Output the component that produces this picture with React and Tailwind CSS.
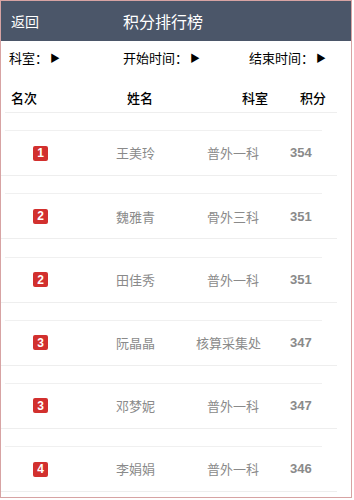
import React from 'react';

const rows = [
  { rank: 1, name: '王美玲', dept: '普外一科', score: 354 },
  { rank: 2, name: '魏雅青', dept: '骨外三科', score: 351 },
  { rank: 2, name: '田佳秀', dept: '普外一科', score: 351 },
  { rank: 3, name: '阮晶晶', dept: '核算采集处', score: 347 },
  { rank: 3, name: '邓梦妮', dept: '普外一科', score: 347 },
  { rank: 4, name: '李娟娟', dept: '普外一科', score: 346 },
];

function Filter({ label, className }) {
  return (
    <div className={`flex items-center ${className}`}>
      <span>{label}</span>
      <span className="ml-[2px] text-[10px]">▶</span>
    </div>
  );
}

export default function App() {
  return (
    <div
      className="w-[352px] h-[498px] border border-[#d7a3a3] bg-white overflow-hidden"
      style={{ fontFamily: '"Noto Sans CJK SC", "Liberation Sans", sans-serif' }}
    >
      {/* Header */}
      <div className="h-[40px] bg-[#4b5669] flex items-center text-white">
        <span className="ml-[10px] text-[14px] w-[112px]">返回</span>
        <span className="text-[16px]">积分排行榜</span>
      </div>

      {/* Filters */}
      <div className="relative h-[38px] text-[13px] text-black">
        <Filter label="科室：" className="absolute left-[8px] top-[7px]" />
        <Filter label="开始时间：" className="absolute left-[122px] top-[7px]" />
        <Filter label="结束时间：" className="absolute left-[248px] top-[7px]" />
      </div>

      {/* Column titles */}
      <div className="ml-[4px] w-[332px] h-[34px] pt-[5px] flex items-center border-b border-[#eeeeee] text-[13px] text-black font-medium">
        <span className="ml-[6px] w-[116px]">名次</span>
        <span className="w-[115px]">姓名</span>
        <span className="w-[58px]">科室</span>
        <span>积分</span>
      </div>

      {/* Rows */}
      <div className="flex flex-col">
        {rows.map((r, i) => (
          <div key={i} className="pt-[17.2px]">
            <div className="ml-[4px] w-[317px] border-t border-[#f0f0f0]" />
            <div className="h-[44px] flex items-center text-[13px] text-[#8a8a8a]">
              <div className="w-[115px] flex">
                <span
                  className="ml-[32px] w-[15px] h-[15px] rounded-[2px] bg-[#d2302e] text-white text-[12px] font-bold flex items-center justify-center leading-none"
                  style={{ fontFamily: '"Liberation Sans", sans-serif' }}
                >
                  {r.rank}
                </span>
              </div>
              <span className="w-[80px]">{r.name}</span>
              <span className="w-[63px] text-right whitespace-nowrap">{r.dept}</span>
              <span
                className="ml-[31px] font-bold"
                style={{ fontFamily: '"Liberation Sans", sans-serif' }}
              >
                {r.score}
              </span>
            </div>
            <div className="w-[336px] border-t border-[#eeeeee]" />
          </div>
        ))}
      </div>
    </div>
  );
}
